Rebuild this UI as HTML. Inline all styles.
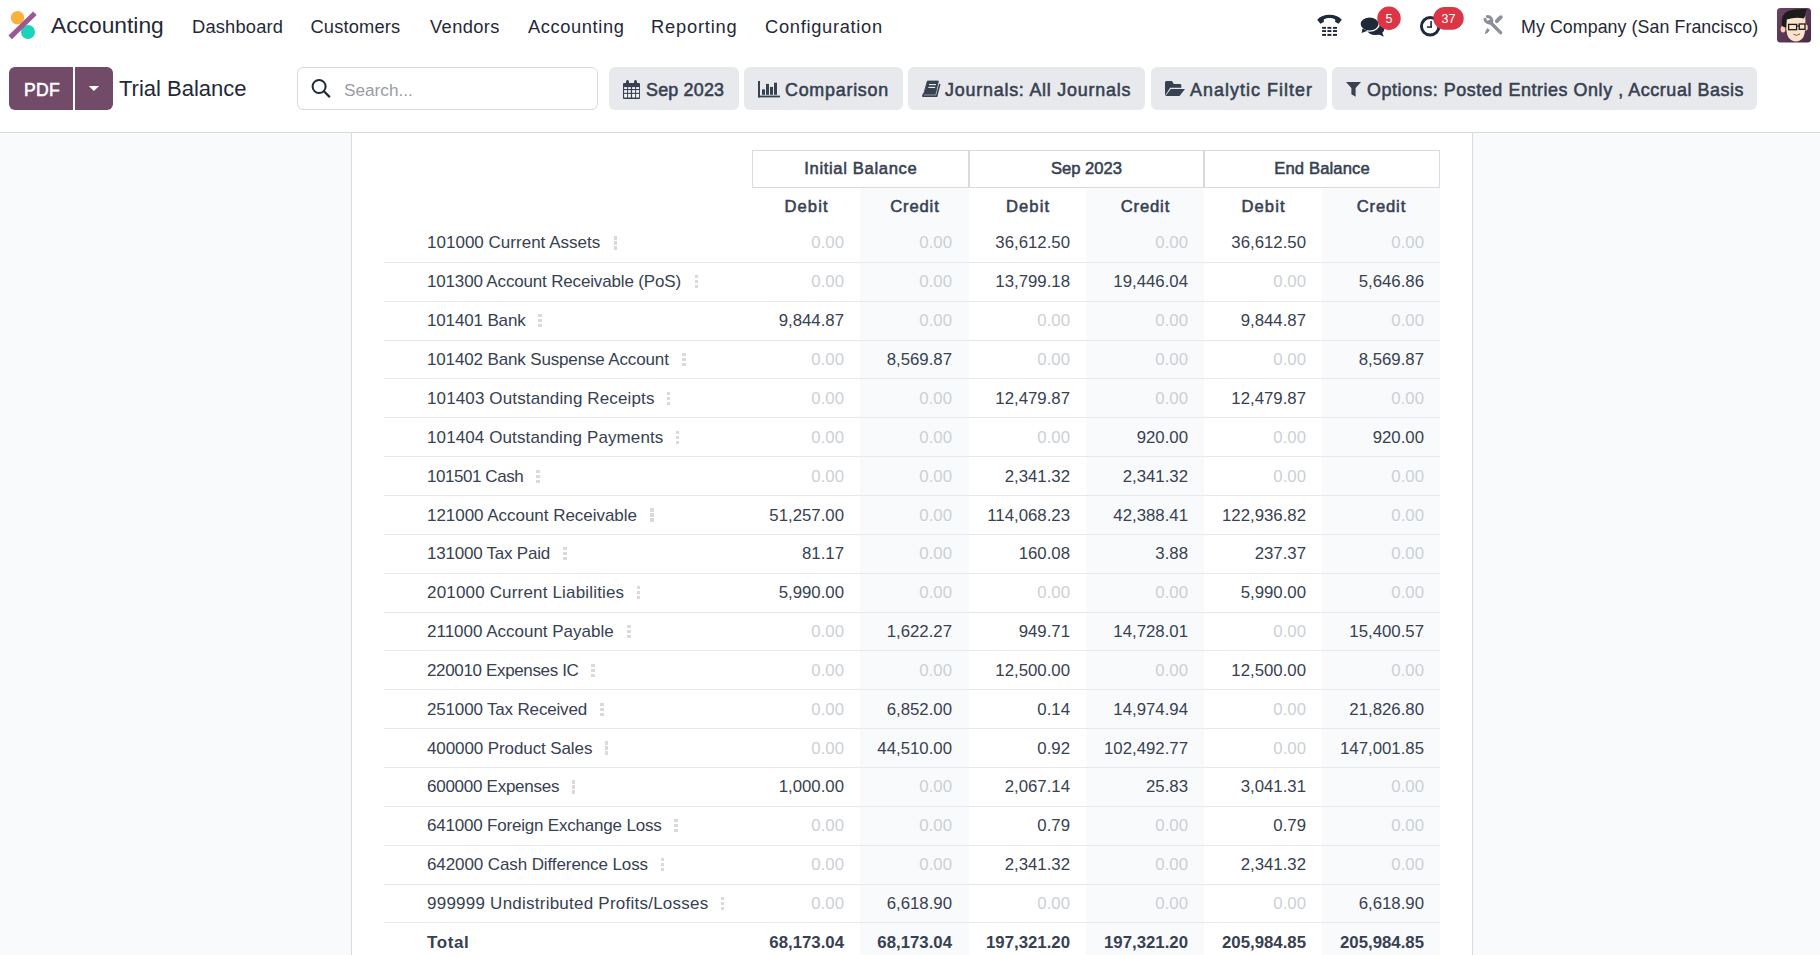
<!DOCTYPE html>
<html><head><meta charset="utf-8">
<style>
*{box-sizing:border-box;margin:0;padding:0}
html,body{width:1820px;height:955px;overflow:hidden;background:#fff;font-family:"Liberation Sans",sans-serif;color:#374151}
.abs{position:absolute}
.nav{position:absolute;left:0;top:0;width:1820px;height:52px;background:#fff}
.nav .t{position:absolute;white-space:nowrap;color:#1f2937}
.cp{position:absolute;left:0;top:52px;width:1820px;height:81px;background:#fff;border-bottom:1px solid #d8dadd}
.main{position:absolute;left:0;top:133px;width:1820px;height:822px;background:#f9fafb}
.panel{position:absolute;left:351px;top:0;width:1122px;height:822px;background:#fff;border-left:1px solid #d8dadd;border-right:1px solid #d8dadd}
.btn{position:absolute;top:67px;height:43px;background:#e7e9ed;border-radius:6px}
.btn .lbl{position:absolute;top:2px;line-height:43px;font-weight:normal;font-size:17.9px;color:#374151;white-space:nowrap;-webkit-text-stroke:0.55px #374151}

.tbl{position:absolute;left:0;top:0;width:1820px;height:955px}
.cbg{position:absolute;top:188px;height:767px;background:#f9fafb}
.gh{position:absolute;top:150px;height:38px;border:1px solid #d8dadd;text-align:center;font-weight:normal;font-size:16.6px;line-height:36px;color:#374151;-webkit-text-stroke:0.55px #374151}
.sh{position:absolute;top:188.5px;height:36px;text-align:center;font-weight:normal;font-size:16.6px;line-height:36px;color:#374151;-webkit-text-stroke:0.55px #374151}
.row{position:absolute;left:384px;width:1056px;height:38.85px}
.rl{position:absolute;left:0;top:-0.5px;width:1056px;height:1px;background:#e7e9ed}
.lb{position:absolute;left:43px;top:0;line-height:38.85px;font-size:17px;white-space:nowrap;color:#374151}
.n{position:absolute;top:0;line-height:38.85px;font-size:16.8px;white-space:nowrap;color:#374151}
.n.z{color:#ccd0d5}
.tot .lb,.tot .n{font-weight:bold}
.row.s .lb,.row.s .n{top:1px}
.dots{position:absolute;top:12.9px;width:4px;height:14px}
.dots b{position:absolute;left:0;width:3.5px;height:3.2px;background:#d8dadd}
.dots b:nth-child(1){top:0}.dots b:nth-child(2){top:5px}.dots b:nth-child(3){top:10px}
</style></head><body>
<div class="nav">
  <svg class="abs" style="left:0;top:0" width="48" height="52" viewBox="0 0 48 52">
    <circle cx="17.5" cy="17.8" r="6.8" fill="#fbb23a"/>
    <circle cx="28" cy="32" r="7" fill="#1ad3bb"/>
    <line x1="10.2" y1="37.4" x2="34.9" y2="13.3" stroke="#9c5894" stroke-width="5"/>
  </svg>
  <div class="t" style="left:51px;top:11.5px;font-size:22.8px">Accounting</div>
  <div class="t" style="left:192px;top:16px;font-size:18.3px;letter-spacing:0.2px">Dashboard</div>
  <div class="t" style="left:310.5px;top:16px;font-size:18.3px;letter-spacing:0.15px">Customers</div>
  <div class="t" style="left:430px;top:16px;font-size:18.3px;letter-spacing:0.4px">Vendors</div>
  <div class="t" style="left:528px;top:16px;font-size:18.3px;letter-spacing:0.6px">Accounting</div>
  <div class="t" style="left:651px;top:16px;font-size:18.3px;letter-spacing:0.8px">Reporting</div>
  <div class="t" style="left:765px;top:16px;font-size:18.3px;letter-spacing:0.7px">Configuration</div>
  <div class="t" style="left:1521px;top:16.5px;font-size:17.8px;letter-spacing:0.08px">My Company (San Francisco)</div>
</div>
<div class="cp">
</div>
<div class="btn" style="left:9px;width:64px;background:#714b67;border-radius:6px 0 0 6px"><span class="lbl" style="left:14.9px;color:#fff;font-size:17.6px;-webkit-text-stroke:0.55px #fff;letter-spacing:0.3px">PDF</span></div>
<div class="btn" style="left:75px;width:38px;background:#714b67;border-radius:0 6px 6px 0"></div>
<div class="abs" style="left:119px;top:76px;font-size:22px;color:#1f2937">Trial Balance</div>
<div class="abs" style="left:297px;top:67px;width:301px;height:43px;border:1px solid #d8dadd;border-radius:6px;background:#fff"></div>
<div class="btn" style="left:609px;width:130px"><span class="lbl" style="left:37px;letter-spacing:0.2px">Sep 2023</span></div>
<div class="btn" style="left:744px;width:159px"><span class="lbl" style="left:41px;letter-spacing:0.75px">Comparison</span></div>
<div class="btn" style="left:908px;width:237px"><span class="lbl" style="left:37px;letter-spacing:0.78px">Journals: All Journals</span></div>
<div class="btn" style="left:1151px;width:176px"><span class="lbl" style="left:39px;letter-spacing:1.04px">Analytic Filter</span></div>
<div class="btn" style="left:1332px;width:425px"><span class="lbl" style="left:35px;letter-spacing:0.57px">Options: Posted Entries Only , Accrual Basis</span></div>
<svg class="abs" style="left:0;top:0;pointer-events:none" width="1820" height="133" viewBox="0 0 1820 133">
<!-- caret -->
<polygon points="88.7,85.9 99.1,85.9 93.9,91.1" fill="#fff"/>
<!-- search -->
<circle cx="319.1" cy="86.5" r="6.5" fill="none" stroke="#1f2937" stroke-width="2"/>
<line x1="323.9" y1="91.3" x2="329.3" y2="96.6" stroke="#1f2937" stroke-width="2.2" stroke-linecap="round"/>
<!-- calendar -->
<g fill="#374151">
<rect x="623" y="83" width="17" height="16" rx="1"/>
<rect x="626" y="80" width="3" height="6" rx="1.5"/>
<rect x="634" y="80" width="3" height="6" rx="1.5"/>
</g>
<g fill="#f3f4f6">
<rect x="624.1" y="87.1" width="3" height="1.9"/><rect x="628.1" y="87.1" width="2.7" height="1.9"/><rect x="632.1" y="87.1" width="3" height="1.9"/><rect x="636.1" y="87.1" width="3" height="1.9"/>
<rect x="624.1" y="90.1" width="3" height="2.7"/><rect x="628.1" y="90.1" width="2.7" height="2.7"/><rect x="632.1" y="90.1" width="3" height="2.7"/><rect x="636.1" y="90.1" width="3" height="2.7"/>
<rect x="624.1" y="93.9" width="3" height="3.6"/><rect x="628.1" y="93.9" width="2.7" height="3.6"/><rect x="632.1" y="93.9" width="3" height="3.6"/><rect x="636.1" y="93.9" width="3" height="3.6"/>
</g>
<!-- bar chart -->
<g fill="#374151">
<rect x="758" y="81" width="2" height="16.4"/>
<rect x="758" y="95.6" width="22" height="1.8"/>
<rect x="762" y="89.4" width="3" height="5.4"/>
<rect x="766" y="83.9" width="3" height="10.9"/>
<rect x="770" y="86.9" width="3" height="7.9"/>
<rect x="774" y="82.7" width="3" height="12.1"/>
</g>
<!-- book -->
<g>
<polygon points="927.4,81 938.4,81 935.4,94.3 923.6,94.3" fill="#374151" stroke="#374151" stroke-width="0.8" stroke-linejoin="round"/>
<line x1="923.6" y1="96.1" x2="936.3" y2="96.1" stroke="#374151" stroke-width="1.9" stroke-linecap="round"/>
<line x1="923.4" y1="94.3" x2="922.9" y2="96.1" stroke="#374151" stroke-width="1.6" stroke-linecap="round"/>
<line x1="939.6" y1="84.6" x2="936.6" y2="96.3" stroke="#374151" stroke-width="1.6" stroke-linecap="round"/>
<line x1="929" y1="84.6" x2="936" y2="84.6" stroke="#eef0f3" stroke-width="1.1"/>
<line x1="928.3" y1="87.4" x2="935.2" y2="87.4" stroke="#eef0f3" stroke-width="1.1"/>
</g>
<!-- folder open -->
<g fill="#374151">
<path d="M1165,82.5 Q1165,81 1166.5,81 L1172,81 L1173.8,84 L1180,84 Q1181.3,84 1181.3,85.3 L1181.3,87.8 L1170.2,87.8 L1165,95.6 Z"/>
<polygon points="1170.8,89 1185,89 1179.5,95.9 1165.4,95.9"/>
</g>
<!-- funnel -->
<polygon points="1346,82 1361,82 1355.6,88 1355.6,96.8 1351.4,94.2 1351.4,88" fill="#374151"/>
<!-- phone -->
<g fill="#1f2937">
<path d="M1317.2,19.8 C1322.5,13.2 1336.5,13.2 1341.8,19.8 L1338.6,23.7 L1335.2,22 L1335.2,19.4 C1331,17.6 1328,17.6 1323.8,19.4 L1323.8,22 L1320.4,23.7 Z"/>
<rect x="1322.1" y="26.9" width="3.9" height="1.9"/><rect x="1327.4" y="26.9" width="4" height="1.9"/><rect x="1333" y="26.9" width="4" height="1.9"/>
<rect x="1322.1" y="30.1" width="3.9" height="1.9"/><rect x="1327.4" y="30.1" width="4" height="1.9"/><rect x="1333" y="30.1" width="4" height="1.9"/>
<rect x="1322.1" y="33.9" width="3.9" height="2"/><rect x="1327.4" y="33.9" width="4" height="2"/><rect x="1333" y="33.9" width="4" height="2"/>
</g>
<!-- chat -->
<g fill="#1f2937">
<ellipse cx="1375.5" cy="28.6" rx="9" ry="6.4"/>
<polygon points="1377,33.6 1383.8,36.8 1381.6,31"/>
<ellipse cx="1369.6" cy="24" rx="9.6" ry="7.1" stroke="#fff" stroke-width="1.3"/>
<polygon points="1362.5,28.5 1361.6,33 1367.5,30.8"/>
</g>
<!-- badge 5 -->
<circle cx="1389" cy="18.3" r="11.7" fill="#dc3545"/>
<!-- clock -->
<circle cx="1430.2" cy="26.3" r="8.75" fill="none" stroke="#1f2937" stroke-width="3"/>
<rect x="1430.3" y="21" width="1.6" height="6.8" fill="#1f2937"/>
<rect x="1426.9" y="26.3" width="5" height="1.5" fill="#1f2937"/>
<!-- badge 37 -->
<rect x="1433.3" y="6.9" width="30.4" height="22.8" rx="11.4" fill="#dc3545"/>
<!-- tools -->
<g stroke="#8a8f98" fill="none" stroke-linecap="round">
<line x1="1489.5" y1="21.5" x2="1500.6" y2="32.6" stroke-width="3.4"/>
<path d="M1485,19.2 A4.3,4.3 0 0 0 1491.5,22.2" stroke-width="3"/>
<path d="M1487.3,16.4 A4.3,4.3 0 0 1 1491.5,22.2" stroke-width="3"/>
<line x1="1500.8" y1="17.2" x2="1496.8" y2="21.2" stroke-width="3.8"/>
</g>
<polygon points="1487.5,28 1489.8,30.2 1487.5,33 1484.6,34.2 1485.6,31" fill="#8a8f98"/>
<!-- avatar -->
<defs><linearGradient id="avg" x1="0" y1="0" x2="1" y2="1"><stop offset="0" stop-color="#6a4463"/><stop offset="1" stop-color="#4b2a45"/></linearGradient></defs>
<rect x="1777" y="8" width="34" height="34.6" rx="3.6" fill="url(#avg)"/>
<ellipse cx="1783" cy="29.3" rx="2.3" ry="3.2" fill="#f5d2b3"/>
<ellipse cx="1806" cy="27.5" rx="1.8" ry="3" fill="#f5d2b3"/>
<path d="M1785.8,17 L1805.3,15.5 Q1806,33 1803.2,37.5 Q1800,41.5 1796,41.5 Q1791.5,41.5 1788.5,37.5 Q1785.6,33 1785.8,17 Z" fill="#fbe3cb"/>
<path d="M1781.8,25 Q1780.8,14 1788,11 Q1795,8.6 1806.8,9 Q1806,11 1805.4,13.5 Q1805.2,17 1804,18.4 Q1795,16.8 1786.8,19.4 L1786.3,27.5 Q1783,27.5 1781.8,25 Z" fill="#1c1c1c"/>
<rect x="1788.6" y="24.4" width="8" height="5.3" fill="none" stroke="#1c1c1c" stroke-width="1.3"/>
<rect x="1799.2" y="24" width="5.8" height="5.3" fill="none" stroke="#1c1c1c" stroke-width="1.3"/>
<line x1="1796.6" y1="26" x2="1799.2" y2="26" stroke="#1c1c1c" stroke-width="1.1"/>
<path d="M1793.5,34.3 Q1796.5,36.5 1800,34" fill="#fff" stroke="#6b3a3a" stroke-width="0.9"/>
</svg>
<div class="abs" style="left:1377px;top:8px;width:24px;height:23px;line-height:23px;text-align:center;color:#fff;font-size:12.5px">5</div>
<div class="abs" style="left:1433px;top:8px;width:31px;height:23px;line-height:23px;text-align:center;color:#fff;font-size:12.5px">37</div>
<div class="abs" style="left:344px;top:79.5px;font-size:17.2px;color:#9a9ca5">Search...</div>
<div class="main"><div class="panel"></div></div>
<div class="tbl"><!--TABLE-->
<div class="cbg" style="left:860px;width:109px"></div>
<div class="cbg" style="left:1086px;width:118px"></div>
<div class="cbg" style="left:1322px;width:118px"></div>
<div class="gh" style="left:752px;width:217px;letter-spacing:0.66px;padding-left:0.66px">Initial Balance</div>
<div class="gh" style="left:969px;width:235px;letter-spacing:0.0px;padding-left:0.0px">Sep 2023</div>
<div class="gh" style="left:1204px;width:236px;letter-spacing:0.14px;padding-left:0.14px">End Balance</div>
<div class="sh" style="left:752px;width:108px;letter-spacing:1.1px;padding-left:1.1px">Debit</div>
<div class="sh" style="left:860px;width:109px;letter-spacing:0.85px;padding-left:0.85px">Credit</div>
<div class="sh" style="left:969px;width:117px;letter-spacing:1.1px;padding-left:1.1px">Debit</div>
<div class="sh" style="left:1086px;width:118px;letter-spacing:0.85px;padding-left:0.85px">Credit</div>
<div class="sh" style="left:1204px;width:118px;letter-spacing:1.1px;padding-left:1.1px">Debit</div>
<div class="sh" style="left:1322px;width:118px;letter-spacing:0.85px;padding-left:0.85px">Credit</div>
<div class="row" style="top:223.55px"><span class="lb" style="letter-spacing:0.016px">101000 Current Assets</span><i class="dots" style="left:229.7px"><b></b><b></b><b></b></i><span class="n z" style="right:596px">0.00</span><span class="n z" style="right:488px">0.00</span><span class="n" style="right:370px">36,612.50</span><span class="n z" style="right:252px">0.00</span><span class="n" style="right:134px">36,612.50</span><span class="n z" style="right:16px">0.00</span></div>
<div class="row s" style="top:262.40px"><div class="rl"></div><span class="lb" style="letter-spacing:-0.163px">101300 Account Receivable (PoS)</span><i class="dots" style="left:310.5px"><b></b><b></b><b></b></i><span class="n z" style="right:596px">0.00</span><span class="n z" style="right:488px">0.00</span><span class="n" style="right:370px">13,799.18</span><span class="n" style="right:252px">19,446.04</span><span class="n z" style="right:134px">0.00</span><span class="n" style="right:16px">5,646.86</span></div>
<div class="row s" style="top:301.25px"><div class="rl"></div><span class="lb" style="letter-spacing:-0.15px">101401 Bank</span><i class="dots" style="left:154.2px"><b></b><b></b><b></b></i><span class="n" style="right:596px">9,844.87</span><span class="n z" style="right:488px">0.00</span><span class="n z" style="right:370px">0.00</span><span class="n z" style="right:252px">0.00</span><span class="n" style="right:134px">9,844.87</span><span class="n z" style="right:16px">0.00</span></div>
<div class="row s" style="top:340.10px"><div class="rl"></div><span class="lb" style="letter-spacing:-0.144px">101402 Bank Suspense Account</span><i class="dots" style="left:298.3px"><b></b><b></b><b></b></i><span class="n z" style="right:596px">0.00</span><span class="n" style="right:488px">8,569.87</span><span class="n z" style="right:370px">0.00</span><span class="n z" style="right:252px">0.00</span><span class="n z" style="right:134px">0.00</span><span class="n" style="right:16px">8,569.87</span></div>
<div class="row s" style="top:378.95px"><div class="rl"></div><span class="lb" style="letter-spacing:0.131px">101403 Outstanding Receipts</span><i class="dots" style="left:282.9px"><b></b><b></b><b></b></i><span class="n z" style="right:596px">0.00</span><span class="n z" style="right:488px">0.00</span><span class="n" style="right:370px">12,479.87</span><span class="n z" style="right:252px">0.00</span><span class="n" style="right:134px">12,479.87</span><span class="n z" style="right:16px">0.00</span></div>
<div class="row s" style="top:417.80px"><div class="rl"></div><span class="lb" style="letter-spacing:0.11px">101404 Outstanding Payments</span><i class="dots" style="left:291.8px"><b></b><b></b><b></b></i><span class="n z" style="right:596px">0.00</span><span class="n z" style="right:488px">0.00</span><span class="n z" style="right:370px">0.00</span><span class="n" style="right:252px">920.00</span><span class="n z" style="right:134px">0.00</span><span class="n" style="right:16px">920.00</span></div>
<div class="row s" style="top:456.65px"><div class="rl"></div><span class="lb" style="letter-spacing:-0.444px">101501 Cash</span><i class="dots" style="left:152.2px"><b></b><b></b><b></b></i><span class="n z" style="right:596px">0.00</span><span class="n z" style="right:488px">0.00</span><span class="n" style="right:370px">2,341.32</span><span class="n" style="right:252px">2,341.32</span><span class="n z" style="right:134px">0.00</span><span class="n z" style="right:16px">0.00</span></div>
<div class="row s" style="top:495.50px"><div class="rl"></div><span class="lb" style="letter-spacing:-0.033px">121000 Account Receivable</span><i class="dots" style="left:266.4px"><b></b><b></b><b></b></i><span class="n" style="right:596px">51,257.00</span><span class="n z" style="right:488px">0.00</span><span class="n" style="right:370px">114,068.23</span><span class="n" style="right:252px">42,388.41</span><span class="n" style="right:134px">122,936.82</span><span class="n z" style="right:16px">0.00</span></div>
<div class="row s" style="top:534.35px"><div class="rl"></div><span class="lb" style="letter-spacing:-0.225px">131000 Tax Paid</span><i class="dots" style="left:179.0px"><b></b><b></b><b></b></i><span class="n" style="right:596px">81.17</span><span class="n z" style="right:488px">0.00</span><span class="n" style="right:370px">160.08</span><span class="n" style="right:252px">3.88</span><span class="n" style="right:134px">237.37</span><span class="n z" style="right:16px">0.00</span></div>
<div class="row s" style="top:573.20px"><div class="rl"></div><span class="lb" style="letter-spacing:0.173px">201000 Current Liabilities</span><i class="dots" style="left:252.6px"><b></b><b></b><b></b></i><span class="n" style="right:596px">5,990.00</span><span class="n z" style="right:488px">0.00</span><span class="n z" style="right:370px">0.00</span><span class="n z" style="right:252px">0.00</span><span class="n" style="right:134px">5,990.00</span><span class="n z" style="right:16px">0.00</span></div>
<div class="row s" style="top:612.05px"><div class="rl"></div><span class="lb" style="letter-spacing:-0.008px">211000 Account Payable</span><i class="dots" style="left:243.1px"><b></b><b></b><b></b></i><span class="n z" style="right:596px">0.00</span><span class="n" style="right:488px">1,622.27</span><span class="n" style="right:370px">949.71</span><span class="n" style="right:252px">14,728.01</span><span class="n z" style="right:134px">0.00</span><span class="n" style="right:16px">15,400.57</span></div>
<div class="row s" style="top:650.90px"><div class="rl"></div><span class="lb" style="letter-spacing:-0.349px">220010 Expenses IC</span><i class="dots" style="left:207.4px"><b></b><b></b><b></b></i><span class="n z" style="right:596px">0.00</span><span class="n z" style="right:488px">0.00</span><span class="n" style="right:370px">12,500.00</span><span class="n z" style="right:252px">0.00</span><span class="n" style="right:134px">12,500.00</span><span class="n z" style="right:16px">0.00</span></div>
<div class="row s" style="top:689.75px"><div class="rl"></div><span class="lb" style="letter-spacing:-0.167px">251000 Tax Received</span><i class="dots" style="left:216.0px"><b></b><b></b><b></b></i><span class="n z" style="right:596px">0.00</span><span class="n" style="right:488px">6,852.00</span><span class="n" style="right:370px">0.14</span><span class="n" style="right:252px">14,974.94</span><span class="n z" style="right:134px">0.00</span><span class="n" style="right:16px">21,826.80</span></div>
<div class="row s" style="top:728.60px"><div class="rl"></div><span class="lb" style="letter-spacing:-0.099px">400000 Product Sales</span><i class="dots" style="left:220.9px"><b></b><b></b><b></b></i><span class="n z" style="right:596px">0.00</span><span class="n" style="right:488px">44,510.00</span><span class="n" style="right:370px">0.92</span><span class="n" style="right:252px">102,492.77</span><span class="n z" style="right:134px">0.00</span><span class="n" style="right:16px">147,001.85</span></div>
<div class="row s" style="top:767.45px"><div class="rl"></div><span class="lb" style="letter-spacing:-0.265px">600000 Expenses</span><i class="dots" style="left:187.9px"><b></b><b></b><b></b></i><span class="n" style="right:596px">1,000.00</span><span class="n z" style="right:488px">0.00</span><span class="n" style="right:370px">2,067.14</span><span class="n" style="right:252px">25.83</span><span class="n" style="right:134px">3,041.31</span><span class="n z" style="right:16px">0.00</span></div>
<div class="row s" style="top:806.30px"><div class="rl"></div><span class="lb" style="letter-spacing:-0.198px">641000 Foreign Exchange Loss</span><i class="dots" style="left:290.2px"><b></b><b></b><b></b></i><span class="n z" style="right:596px">0.00</span><span class="n z" style="right:488px">0.00</span><span class="n" style="right:370px">0.79</span><span class="n z" style="right:252px">0.00</span><span class="n" style="right:134px">0.79</span><span class="n z" style="right:16px">0.00</span></div>
<div class="row s" style="top:845.15px"><div class="rl"></div><span class="lb" style="letter-spacing:-0.099px">642000 Cash Difference Loss</span><i class="dots" style="left:276.6px"><b></b><b></b><b></b></i><span class="n z" style="right:596px">0.00</span><span class="n z" style="right:488px">0.00</span><span class="n" style="right:370px">2,341.32</span><span class="n z" style="right:252px">0.00</span><span class="n" style="right:134px">2,341.32</span><span class="n z" style="right:16px">0.00</span></div>
<div class="row s" style="top:884.00px"><div class="rl"></div><span class="lb" style="letter-spacing:0.238px">999999 Undistributed Profits/Losses</span><i class="dots" style="left:336.7px"><b></b><b></b><b></b></i><span class="n z" style="right:596px">0.00</span><span class="n" style="right:488px">6,618.90</span><span class="n z" style="right:370px">0.00</span><span class="n z" style="right:252px">0.00</span><span class="n z" style="right:134px">0.00</span><span class="n" style="right:16px">6,618.90</span></div>
<div class="row tot s" style="top:922.85px"><div class="rl"></div><span class="lb" style="letter-spacing:0.6px">Total</span><span class="n" style="right:596px">68,173.04</span><span class="n" style="right:488px">68,173.04</span><span class="n" style="right:370px">197,321.20</span><span class="n" style="right:252px">197,321.20</span><span class="n" style="right:134px">205,984.85</span><span class="n" style="right:16px">205,984.85</span></div>
<!--/TABLE--></div>
</body></html>
